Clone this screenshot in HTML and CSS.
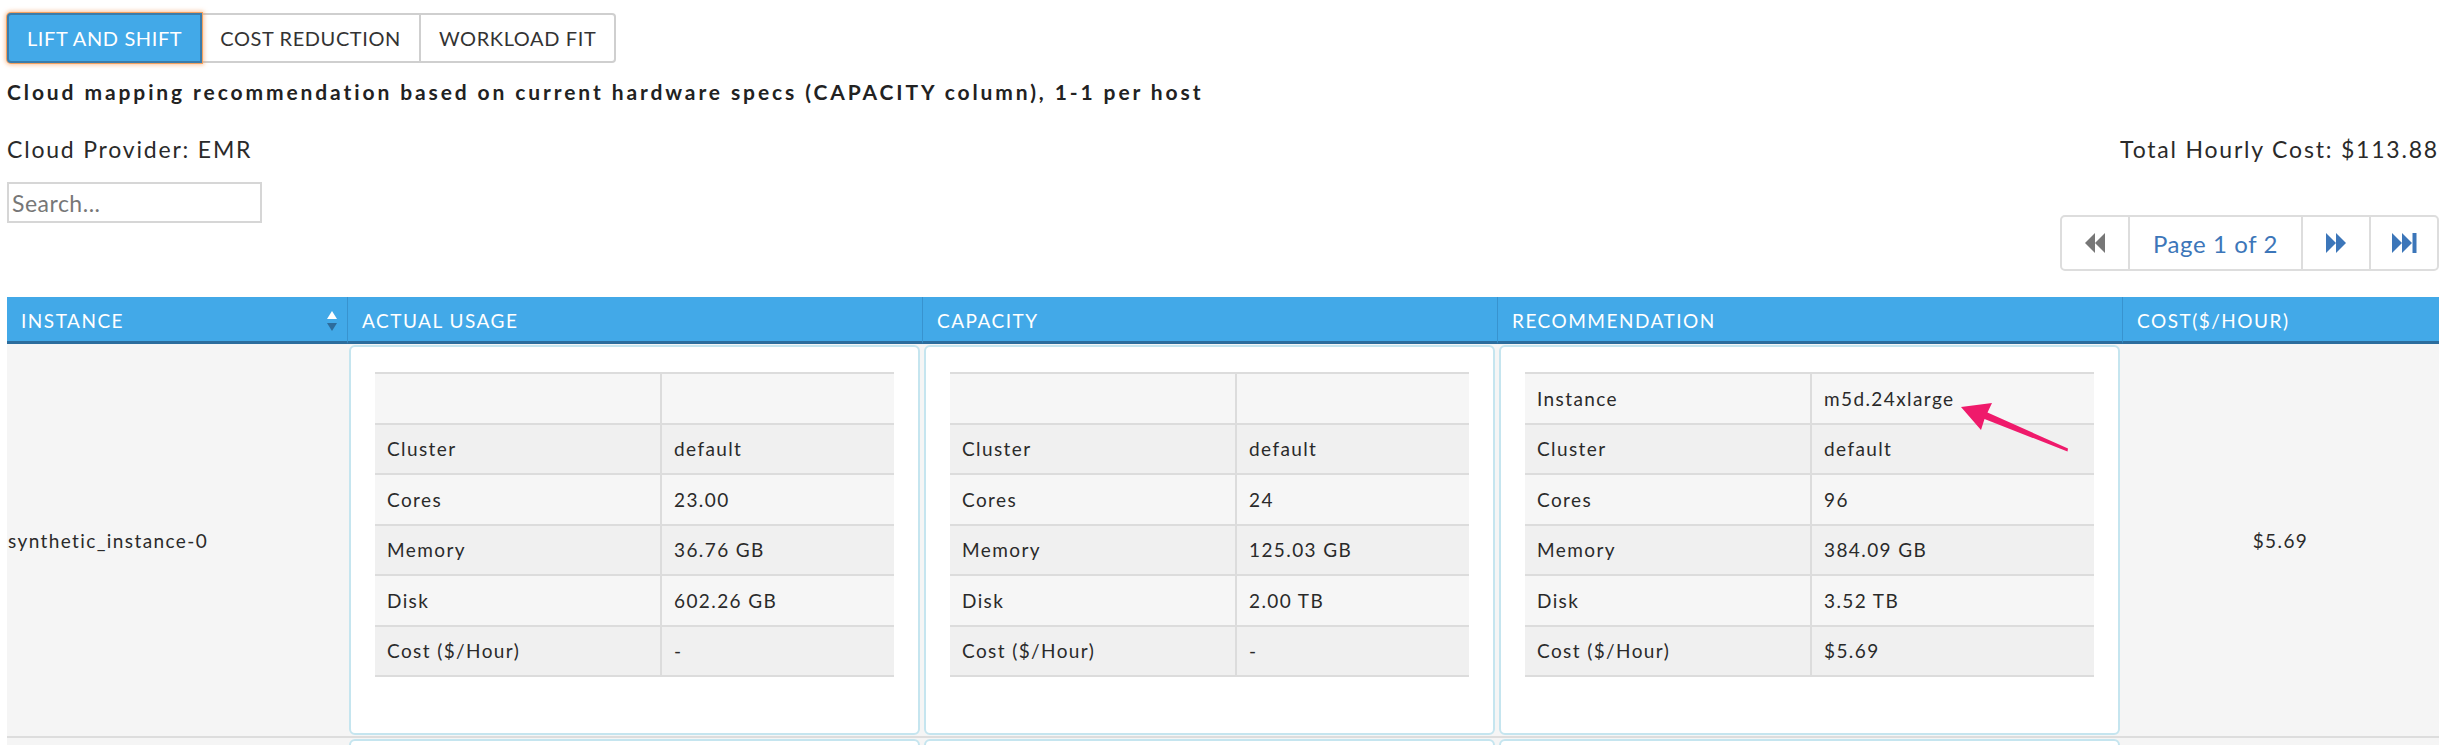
FILE: index.html
```html
<!DOCTYPE html>
<html lang="en">
<head>
<meta charset="utf-8">
<title>Cloud mapping</title>
<link rel="stylesheet" href="styles.css">
</head>
<body>
<div class="page">
  <div class="tabs">
    <button class="tab active">LIFT AND SHIFT</button>
    <button class="tab">COST REDUCTION</button>
    <button class="tab">WORKLOAD FIT</button>
  </div>
  <h2 class="subtitle">Cloud mapping recommendation based on current hardware specs (CAPACITY column), 1-1 per host</h2>
  <div class="info-row">
    <span>Cloud Provider: EMR</span>
    <span>Total Hourly Cost: $113.88</span>
  </div>
  <div class="tools-row">
    <input class="search" type="text" placeholder="Search...">
    <div class="pager">
      <span class="pg-btn disabled">
        <svg width="22" height="20" viewBox="0 0 22 20"><polygon points="11,0 11,20 1,10" fill="#777"/><polygon points="21,0 21,20 11,10" fill="#777"/></svg>
      </span>
      <span class="pg-label">Page 1 of 2</span>
      <span class="pg-btn">
        <svg width="22" height="20" viewBox="0 0 22 20"><polygon points="1,0 11,10 1,20" fill="#3c76b9"/><polygon points="11,0 21,10 11,20" fill="#3c76b9"/></svg>
      </span>
      <span class="pg-btn">
        <svg width="25" height="20" viewBox="0 0 25 20"><polygon points="0,0 10,10 0,20" fill="#3c76b9"/><polygon points="10,0 20,10 10,20" fill="#3c76b9"/><rect x="20.5" y="0" width="4" height="20" fill="#3c76b9"/></svg>
      </span>
    </div>
  </div>

  <table class="grid">
    <colgroup>
      <col class="c-inst"><col class="c-usage"><col class="c-cap"><col class="c-rec"><col class="c-cost">
    </colgroup>
    <thead>
      <tr>
        <th><div class="th-inner"><span>INSTANCE</span>
          <svg class="sort" width="10" height="20" viewBox="0 0 10 20"><polygon points="5,0 10,8 0,8" fill="#fff"/><polygon points="0,12 10,12 5,20" fill="#2d6c9c"/></svg></div></th>
        <th>ACTUAL USAGE</th>
        <th>CAPACITY</th>
        <th>RECOMMENDATION</th>
        <th>COST($/HOUR)</th>
      </tr>
    </thead>
    <tbody>
      <tr>
        <td class="inst">synthetic_instance-0</td>
        <td class="card-cell"><div class="card">
          <table class="spec">
            <colgroup><col class="s-label"><col></colgroup>
            <tr><td></td><td></td></tr>
            <tr><td>Cluster</td><td>default</td></tr>
            <tr><td>Cores</td><td>23.00</td></tr>
            <tr><td>Memory</td><td>36.76 GB</td></tr>
            <tr><td>Disk</td><td>602.26 GB</td></tr>
            <tr><td>Cost ($/Hour)</td><td>-</td></tr>
          </table>
        </div></td>
        <td class="card-cell"><div class="card">
          <table class="spec">
            <colgroup><col class="s-label"><col></colgroup>
            <tr><td></td><td></td></tr>
            <tr><td>Cluster</td><td>default</td></tr>
            <tr><td>Cores</td><td>24</td></tr>
            <tr><td>Memory</td><td>125.03 GB</td></tr>
            <tr><td>Disk</td><td>2.00 TB</td></tr>
            <tr><td>Cost ($/Hour)</td><td>-</td></tr>
          </table>
        </div></td>
        <td class="card-cell"><div class="card">
          <table class="spec">
            <colgroup><col class="s-label"><col></colgroup>
            <tr><td>Instance</td><td class="annotated">m5d.24xlarge
              <svg class="arrow" width="130" height="60" viewBox="0 0 130 60"><polygon points="10,8 41,4 36.5,13.5 117,49.5 116.5,52.5 33.5,20 30,31" fill="#ef1a6b"/></svg></td></tr>
            <tr><td>Cluster</td><td>default</td></tr>
            <tr><td>Cores</td><td>96</td></tr>
            <tr><td>Memory</td><td>384.09 GB</td></tr>
            <tr><td>Disk</td><td>3.52 TB</td></tr>
            <tr><td>Cost ($/Hour)</td><td>$5.69</td></tr>
          </table>
        </div></td>
        <td class="cost">$5.69</td>
      </tr>
      <tr>
        <td class="inst">synthetic_instance-1</td>
        <td class="card-cell"><div class="card">
          <table class="spec">
            <colgroup><col class="s-label"><col></colgroup>
            <tr><td></td><td></td></tr>
            <tr><td>Cluster</td><td>default</td></tr>
          </table>
        </div></td>
        <td class="card-cell"><div class="card">
          <table class="spec">
            <colgroup><col class="s-label"><col></colgroup>
            <tr><td></td><td></td></tr>
            <tr><td>Cluster</td><td>default</td></tr>
          </table>
        </div></td>
        <td class="card-cell"><div class="card">
          <table class="spec">
            <colgroup><col class="s-label"><col></colgroup>
            <tr><td>Instance</td><td>m5d.24xlarge</td></tr>
            <tr><td>Cluster</td><td>default</td></tr>
          </table>
        </div></td>
        <td class="cost">$5.69</td>
      </tr>
    </tbody>
  </table>
</div>
</body>
</html>
```

FILE: styles.css
```css
html, body {
  margin: 0;
  background: #fff;
}
body {
  font-family: Lato, "Liberation Sans", sans-serif;
  color: #333;
}
.page {
  padding: 13px 9px 0 7px;
}

/* tabs */
.tabs {
  display: inline-flex;
}
.tab {
  height: 50px;
  padding: 0 18px;
  font-family: Lato, "Liberation Sans", sans-serif;
  font-size: 20px;
  letter-spacing: 0.6px;
  color: #333;
  background: #fff;
  border: 2px solid #cfcfcf;
  border-left-width: 0;
  cursor: pointer;
}
.tab.active {
  background: #42a9e8;
  color: #fff;
  border: 2px solid #3a7cab;
  border-radius: 4px 0 0 4px;
  box-shadow: 0 0 0 1px #f3a05e, 0 0 4px 2px rgba(243, 150, 80, 0.55);
  position: relative;
}
.tab:last-child {
  border-radius: 0 4px 4px 0;
}

.subtitle {
  margin: 17px 0 0;
  font-size: 21px;
  line-height: 24px;
  font-weight: 700;
  letter-spacing: 2.9px;
  color: #222;
}

.info-row {
  display: flex;
  justify-content: space-between;
  margin-top: 32px;
  font-size: 23px;
  line-height: 27px;
  letter-spacing: 1.8px;
  color: #2a2a2a;
}

.tools-row {
  display: flex;
  justify-content: space-between;
  align-items: flex-start;
  margin-top: 19px;
}
.search {
  box-sizing: border-box;
  width: 255px;
  height: 41px;
  margin: 0;
  padding: 0 3px;
  border: 2px solid #d6d6d6;
  font-family: Lato, "Liberation Sans", sans-serif;
  font-size: 23px;
  letter-spacing: 0.5px;
  color: #333;
}
.search::placeholder {
  color: #777;
}

.pager {
  display: flex;
  margin-top: 33px;
  height: 56px;
  box-sizing: border-box;
  border: 2px solid #dddddd;
  border-radius: 5px;
  background: #fff;
}
.pg-btn {
  width: 66px;
  display: flex;
  align-items: center;
  justify-content: center;
}
.pg-btn + .pg-btn,
.pg-label + .pg-btn,
.pg-btn + .pg-label {
  border-left: 2px solid #dddddd;
}
.pg-label {
  width: 171px;
  display: flex;
  align-items: center;
  justify-content: center;
  font-size: 24px;
  letter-spacing: 0.6px;
  color: #3c76b9;
}

/* main grid */
.grid {
  margin-top: 26px;
  width: 2432px;
  table-layout: fixed;
  border-collapse: separate;
  border-spacing: 0;
}
.c-inst { width: 340px; }
.c-usage { width: 575px; }
.c-cap { width: 575px; }
.c-rec { width: 625px; }
.c-cost { width: 317px; }

.grid th {
  height: 47px;
  padding: 3px 0 0 14px;
  box-sizing: border-box;
  background: #42a9e8;
  border-bottom: 3px solid #2c6d9d;
  color: #fff;
  font-size: 19px;
  font-weight: 400;
  letter-spacing: 1.5px;
  text-align: left;
  vertical-align: middle;
}
.grid th + th {
  border-left: 1px solid #3893cf;
}
.th-inner {
  display: flex;
  justify-content: space-between;
  align-items: center;
  padding-right: 10px;
}
.sort {
  display: block;
}

.grid > tbody > tr > td {
  border-bottom: 2px solid #dddddd;
  vertical-align: middle;
}
.inst {
  background: #f5f5f5;
  font-size: 19px;
  letter-spacing: 1.4px;
  color: #2a2a2a;
}
.cost {
  background: #f5f5f5;
  text-align: center;
  font-size: 19px;
  letter-spacing: 1.4px;
  color: #2a2a2a;
}
.card-cell {
  padding: 1px 2px;
  background: #f5f5f5;
}
.card {
  background: #fff;
  border: 2px solid #c5e5ef;
  border-radius: 6px;
  padding: 25px 24px 56px;
}

.spec {
  width: 100%;
  table-layout: fixed;
  border-collapse: separate;
  border-spacing: 0;
  border-top: 2px solid #dcdcdc;
}
.s-label { width: 287px; }
.spec td {
  height: 48.5px;
  padding: 0 12px;
  border-bottom: 2px solid #dcdcdc;
  font-size: 19px;
  letter-spacing: 1.4px;
  color: #2a2a2a;
  vertical-align: middle;
  white-space: nowrap;
}
.spec td:first-child {
  border-right: 2px solid #dcdcdc;
}
.spec tr:nth-child(odd) td { background: #f6f6f6; }
.spec tr:nth-child(even) td { background: #f0f0f0; }

.annotated {
  position: relative;
}
.arrow {
  position: absolute;
  left: 139px;
  top: 25px;
  z-index: 2;
}
```
